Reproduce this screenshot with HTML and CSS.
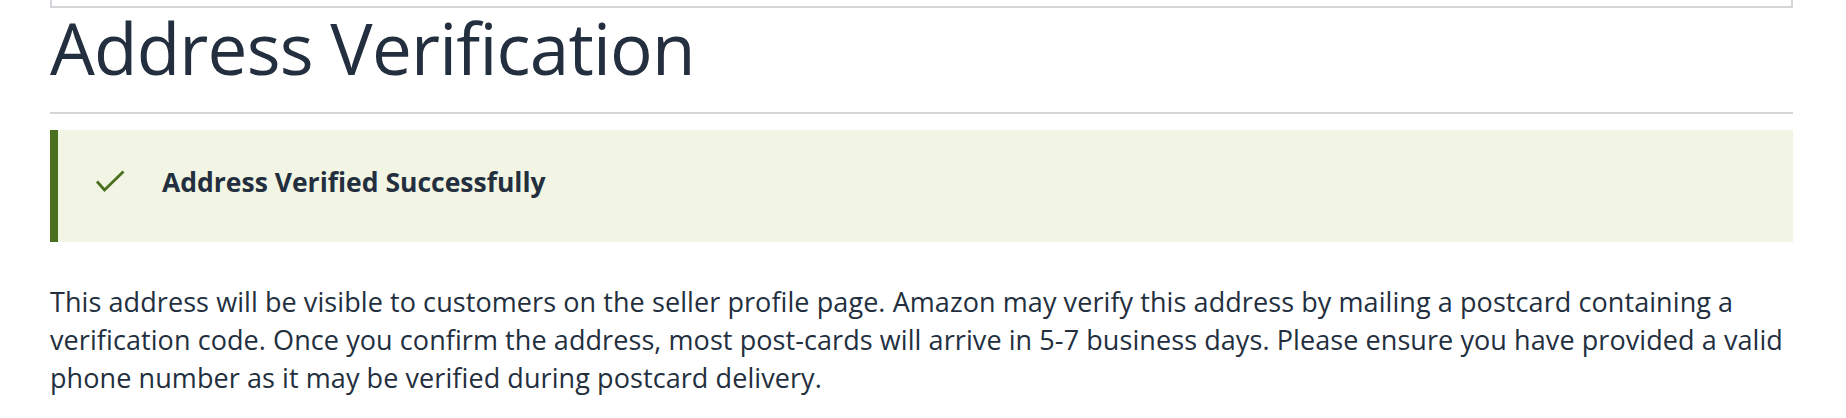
FILE: index.html
```html
<!DOCTYPE html>
<html lang="en">
<head>
    <meta charset="UTF-8">
    <meta name="viewport" content="width=device-width, initial-scale=1.0">
    <title>Address Verification</title>
    <link rel="stylesheet" href="styles.css">
</head>
<body>
    <div class="page">
        <div class="top-box"></div>

        <h1 class="title">Address Verification</h1>
        <hr class="divider">

        <div class="alert alert-success">
            <svg class="alert-icon" width="30" height="24" viewBox="0 0 30 24">
                <path d="M2 11.5 L9.5 20 L28.5 1.5" fill="none" stroke="#4a6f1f" stroke-width="2.8"/>
            </svg>
            <span class="alert-title">Address Verified Successfully</span>
        </div>

        <p class="note">This address will be visible to customers on the seller profile page. Amazon may verify this address by mailing a postcard containing a verification code. Once you confirm the address, most post-cards will arrive in 5-7 business days. Please ensure you have provided a valid phone number as it may be verified during postcard delivery.</p>
    </div>
</body>
</html>
```

FILE: styles.css
```css
body {
    margin: 0;
    background-color: #ffffff;
    color: #232f3e;
    font-family: "Open Sans", "Noto Sans", Arial, sans-serif;
}
.page {
    margin: 0 53px 0 50px;
}
.top-box {
    height: 6px;
    border: 2px solid #d5d6da;
    border-top: none;
}
.title {
    margin: 4px 0 0 0;
    font-size: 71px;
    font-weight: 400;
    line-height: 72px;
    letter-spacing: -0.8px;
}
.divider {
    margin: 28px 0 0 0;
    height: 2px;
    border: none;
    background-color: #d5d6da;
}
.alert {
    display: flex;
    align-items: flex-start;
    margin-top: 16px;
    padding: 32px 20px 40px 37px;
    line-height: 40px;
}
.alert-success {
    background-color: #f2f5e3;
    border-left: 8px solid #4a6f1f;
}
.alert-icon {
    margin: 8px 37px 0 0;
}
.alert-title {
    font-size: 26.5px;
    font-weight: 700;
}
.note {
    margin: 41px 0 0 0;
    font-size: 27px;
    line-height: 38px;
    letter-spacing: 0.08px;
}
```
